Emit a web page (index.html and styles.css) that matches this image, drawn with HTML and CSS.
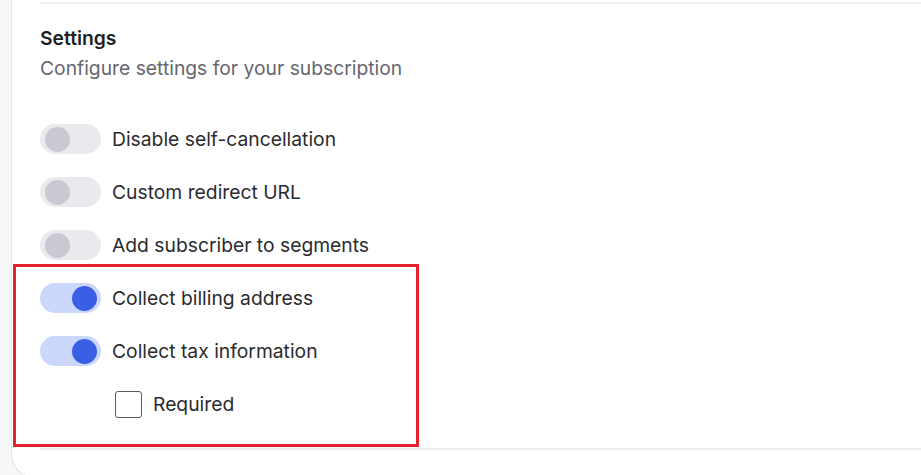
FILE: index.html
```html
<!DOCTYPE html>
<html>
<head>
<meta charset="utf-8">
<link rel="stylesheet" href="styles.css">
</head>
<body>
<div class="page">
  <div class="card">
    <div class="divider top"></div>
    <section class="settings">
      <h2 class="title">Settings</h2>
      <p class="subtitle">Configure settings for your subscription</p>
      <div class="options">
        <div class="row">
          <span class="toggle"><span class="knob"></span></span>
          <span class="label">Disable self-cancellation</span>
        </div>
        <div class="row">
          <span class="toggle"><span class="knob"></span></span>
          <span class="label">Custom redirect URL</span>
        </div>
        <div class="row">
          <span class="toggle"><span class="knob"></span></span>
          <span class="label">Add subscriber to segments</span>
        </div>
        <div class="row">
          <span class="toggle on"><span class="knob"></span></span>
          <span class="label">Collect billing address</span>
        </div>
        <div class="row">
          <span class="toggle on"><span class="knob"></span></span>
          <span class="label">Collect tax information</span>
        </div>
        <div class="row sub">
          <span class="checkbox"></span>
          <span class="label">Required</span>
        </div>
      </div>
    </section>
    <div class="divider bottom"></div>
  </div>
  <div class="highlight"></div>
</div>
</body>
</html>
```

FILE: styles.css
```css
html, body {
  margin: 0;
  padding: 0;
  height: 100%;
  overflow: hidden;
}
body {
  background: #f6f7f9;
  font-family: Inter, "Liberation Sans", sans-serif;
  color: #1f2024;
}
.page {
  position: relative;
  padding-left: 11px;
  height: 475px;
}
.card {
  box-sizing: border-box;
  height: 478px;
  background: #ffffff;
  border-left: 1px solid #e3e4e8;
  border-bottom: 1px solid #e3e4e8;
  border-radius: 0 0 0 24px;
  padding-left: 28px;
  padding-top: 2px;
}
.divider {
  background: #eeeff2;
}
.divider.top {
  height: 2px;
}
.divider.bottom {
  height: 2px;
  background: #ebecef;
  margin-top: 29px;
}
.settings {
  padding-top: 22px;
}
.title {
  margin: 0;
  font-size: 19.3px;
  line-height: 24px;
  font-weight: 600;
  color: #1e1f23;
}
.subtitle {
  margin: 6px 0 0;
  font-size: 19.3px;
  line-height: 24px;
  color: #66666e;
}
.options {
  margin-top: 44px;
  display: flex;
  flex-direction: column;
  gap: 23px;
}
.row {
  display: flex;
  align-items: center;
  height: 30px;
  gap: 11px;
}
.label {
  font-size: 19.3px;
  line-height: 24px;
  color: #2a2b30;
}
.toggle {
  box-sizing: border-box;
  width: 61px;
  height: 30px;
  border-radius: 15px;
  background: #e9eaee;
  display: flex;
  align-items: center;
  padding: 0 5px;
}
.knob {
  width: 25px;
  height: 25px;
  border-radius: 50%;
  background: #c8c9d1;
}
.toggle.on {
  background: #ccd7fc;
  justify-content: flex-end;
  padding-right: 4px;
}
.toggle.on .knob {
  background: #3a5fe4;
}
.row.sub {
  padding-left: 75px;
}
.checkbox {
  box-sizing: border-box;
  width: 27px;
  height: 27px;
  border: 1.5px solid #5c5c62;
  border-radius: 3px;
  background: #fff;
}
.highlight {
  position: absolute;
  left: 13px;
  top: 264px;
  width: 406px;
  height: 183px;
  box-sizing: border-box;
  border: 3px solid #e5212b;
  pointer-events: none;
}
```
